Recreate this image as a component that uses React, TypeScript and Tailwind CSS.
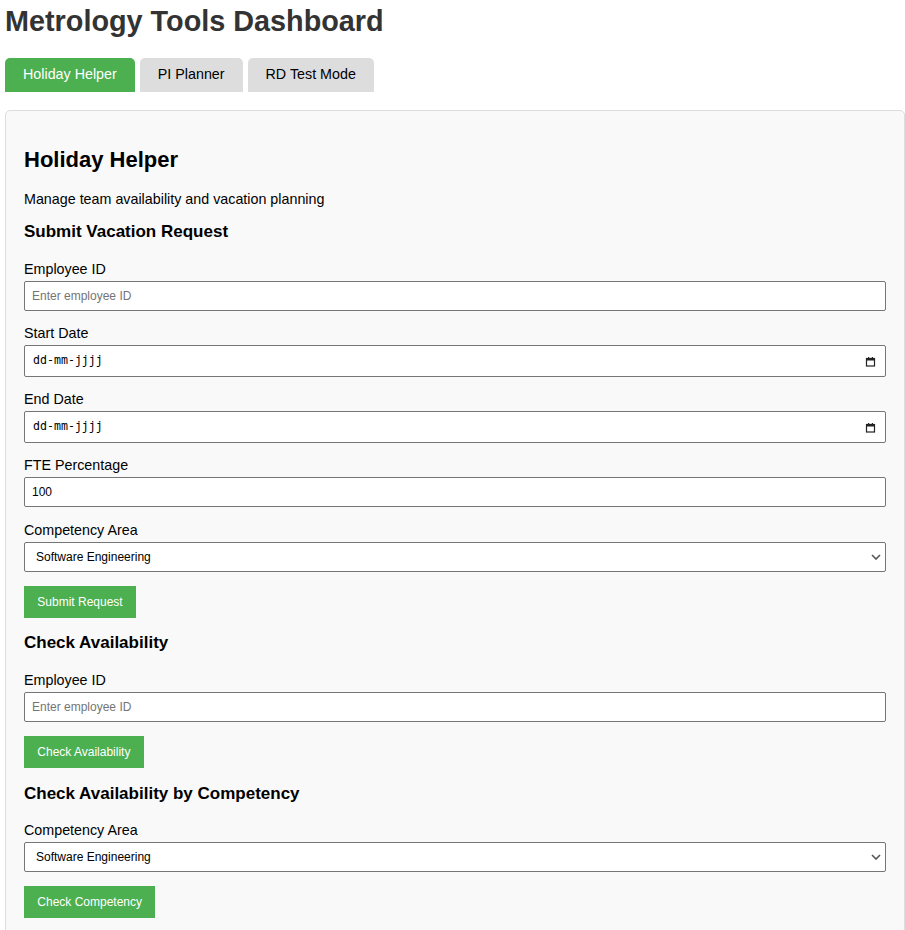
import React from "react";

const font = { fontFamily: '"Liberation Sans", Arial, sans-serif' };

function Label({ children, className = "" }: { children: React.ReactNode; className?: string }) {
  return <label className={`block text-[14.3px] leading-[16px] text-black mb-[4px] ${className}`}>{children}</label>;
}

function TextInput({ placeholder, value }: { placeholder?: string; value?: string }) {
  return (
    <input
      type="text"
      placeholder={placeholder}
      defaultValue={value}
      className="block w-full h-[30px] bg-white border border-[#767676] rounded-[2px] pl-[7px] text-[12px] text-black placeholder:text-[#757575] outline-none"
      style={font}
    />
  );
}

function DateInput() {
  return (
    <div className="flex items-center justify-between w-full h-[32px] bg-white border border-[#767676] rounded-[2px] pl-[8px] pr-[9px]">
      <span className="text-[11.6px] text-black" style={{ fontFamily: '"DejaVu Sans Mono", "Liberation Mono", monospace' }}>
        dd-mm-jjjj
      </span>
      <svg width="11" height="11" viewBox="0 0 11 11" fill="none">
        <rect x="1.5" y="2.5" width="8" height="7.5" stroke="#222" strokeWidth="1.2" fill="none" />
        <rect x="1.5" y="2.5" width="8" height="2" fill="#222" />
        <rect x="3" y="1" width="1.2" height="2" fill="#222" />
        <rect x="6.8" y="1" width="1.2" height="2" fill="#222" />
      </svg>
    </div>
  );
}

function SelectBox({ value }: { value: string }) {
  return (
    <div className="flex items-center justify-between w-full h-[30px] bg-white border border-[#767676] rounded-[2px] pl-[11px] pr-[4px]">
      <span className="text-[12px] text-black">{value}</span>
      <svg width="10" height="6" viewBox="0 0 10 6" fill="none">
        <path d="M1 1 L5 5 L9 1" stroke="#555" strokeWidth="1.6" fill="none" />
      </svg>
    </div>
  );
}

function GreenButton({ children, className = "" }: { children: React.ReactNode; className?: string }) {
  return (
    <button className={`block h-[32px] px-[13.3px] bg-[#4caf50] text-white text-[12px] ${className}`} style={font}>
      {children}
    </button>
  );
}

export default function App() {
  return (
    <div className="bg-white min-h-[930px] pl-[5px] pt-[5px] text-black" style={font}>
      <h1 className="text-[28.8px] leading-[32px] font-bold text-[#333]">Metrology Tools Dashboard</h1>

      <div className="flex gap-[5px] mt-[21px]">
        <button className="h-[34px] px-[18px] bg-[#4caf50] text-white text-[14.3px] rounded-t-[5px]">Holiday Helper</button>
        <button className="h-[34px] px-[18px] bg-[#dddddd] text-black text-[14.3px] rounded-t-[5px]">PI Planner</button>
        <button className="h-[34px] px-[18px] bg-[#dddddd] text-black text-[14.3px] rounded-t-[5px]">RD Test Mode</button>
      </div>

      <div className="mt-[18px] w-[900px] border border-[#dddddd] rounded-[5px] bg-[#f9f9f9] pt-[36px] pl-[18px] pr-[18px] pb-[20px]">
        <h2 className="text-[22px] leading-[25px] font-bold">Holiday Helper</h2>
        <p className="mt-[19px] text-[14.3px] leading-[16px]">Manage team availability and vacation planning</p>

        <h3 className="mt-[15px] text-[17px] leading-[20px] font-bold">Submit Vacation Request</h3>
        <div className="mt-[19px]">
          <Label>Employee ID</Label>
          <TextInput placeholder="Enter employee ID" />
        </div>
        <div className="mt-[14px]">
          <Label>Start Date</Label>
          <DateInput />
        </div>
        <div className="mt-[14px]">
          <Label>End Date</Label>
          <DateInput />
        </div>
        <div className="mt-[14px]">
          <Label>FTE Percentage</Label>
          <TextInput value="100" />
        </div>
        <div className="mt-[15px]">
          <Label>Competency Area</Label>
          <SelectBox value="Software Engineering" />
        </div>
        <GreenButton className="mt-[14px]">Submit Request</GreenButton>

        <h3 className="mt-[15px] text-[17px] leading-[20px] font-bold">Check Availability</h3>
        <div className="mt-[19px]">
          <Label>Employee ID</Label>
          <TextInput placeholder="Enter employee ID" />
        </div>
        <GreenButton className="mt-[14px]">Check Availability</GreenButton>

        <h3 className="mt-[16px] text-[17px] leading-[20px] font-bold">Check Availability by Competency</h3>
        <div className="mt-[18px]">
          <Label>Competency Area</Label>
          <SelectBox value="Software Engineering" />
        </div>
        <GreenButton className="mt-[14px]">Check Competency</GreenButton>
      </div>
    </div>
  );
}
